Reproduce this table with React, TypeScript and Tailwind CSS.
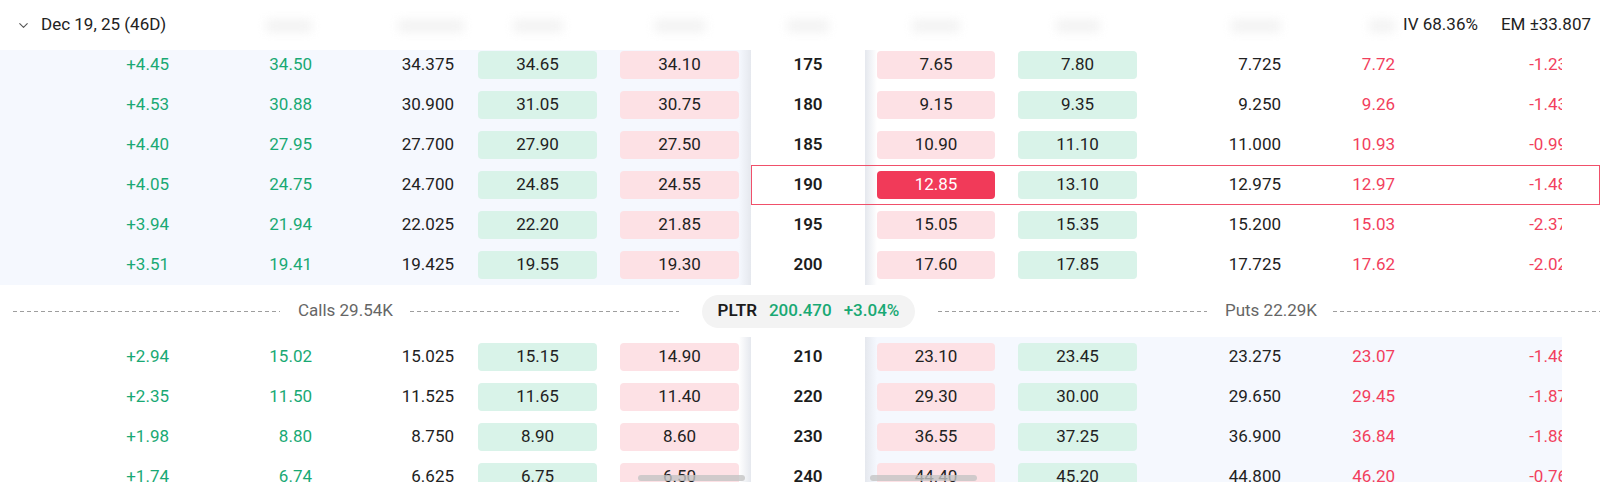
import React from "react";
import { ChevronDown } from "lucide-react";

interface Row {
  strike: number;
  chg: string;
  last: string;
  mid: string;
  bid: string;
  ask: string;
  pBid: string;
  pAsk: string;
  pMid: string;
  pLast: string;
  pChg: string;
  hl?: boolean;
}

const upper: Row[] = [
  { strike: 175, chg: "+4.45", last: "34.50", mid: "34.375", bid: "34.65", ask: "34.10", pBid: "7.65", pAsk: "7.80", pMid: "7.725", pLast: "7.72", pChg: "-1.23" },
  { strike: 180, chg: "+4.53", last: "30.88", mid: "30.900", bid: "31.05", ask: "30.75", pBid: "9.15", pAsk: "9.35", pMid: "9.250", pLast: "9.26", pChg: "-1.43" },
  { strike: 185, chg: "+4.40", last: "27.95", mid: "27.700", bid: "27.90", ask: "27.50", pBid: "10.90", pAsk: "11.10", pMid: "11.000", pLast: "10.93", pChg: "-0.99" },
  { strike: 190, chg: "+4.05", last: "24.75", mid: "24.700", bid: "24.85", ask: "24.55", pBid: "12.85", pAsk: "13.10", pMid: "12.975", pLast: "12.97", pChg: "-1.48", hl: true },
  { strike: 195, chg: "+3.94", last: "21.94", mid: "22.025", bid: "22.20", ask: "21.85", pBid: "15.05", pAsk: "15.35", pMid: "15.200", pLast: "15.03", pChg: "-2.37" },
  { strike: 200, chg: "+3.51", last: "19.41", mid: "19.425", bid: "19.55", ask: "19.30", pBid: "17.60", pAsk: "17.85", pMid: "17.725", pLast: "17.62", pChg: "-2.02" },
];

const lower: Row[] = [
  { strike: 210, chg: "+2.94", last: "15.02", mid: "15.025", bid: "15.15", ask: "14.90", pBid: "23.10", pAsk: "23.45", pMid: "23.275", pLast: "23.07", pChg: "-1.48" },
  { strike: 220, chg: "+2.35", last: "11.50", mid: "11.525", bid: "11.65", ask: "11.40", pBid: "29.30", pAsk: "30.00", pMid: "29.650", pLast: "29.45", pChg: "-1.87" },
  { strike: 230, chg: "+1.98", last: "8.80", mid: "8.750", bid: "8.90", ask: "8.60", pBid: "36.55", pAsk: "37.25", pMid: "36.900", pLast: "36.84", pChg: "-1.88" },
  { strike: 240, chg: "+1.74", last: "6.74", mid: "6.625", bid: "6.75", ask: "6.50", pBid: "44.40", pAsk: "45.20", pMid: "44.800", pLast: "46.20", pChg: "-0.76" },
];

// one strike row, calls on the left and puts on the right
const ChainRow = ({ row, callItm }: { row: Row; callItm: boolean }) => {
  return (
    <div className="relative flex h-[40px] items-center">
      <div className={`flex h-full w-[751px] items-center ${callItm ? "bg-[#f5f8fe]" : "bg-white"}`}>
        <div className="w-[177px] pr-[8px] text-right text-[#19a974]">{row.chg}</div>
        <div className="w-[147px] pr-[12px] text-right text-[#19a974]">{row.last}</div>
        <div className="w-[142px] pr-[12px] text-right text-[#222]">{row.mid}</div>
        <div className="w-[143px] pl-[12px]">
          <div className="flex h-[28px] w-[119px] items-center justify-center rounded-[4px] bg-[#d9f3e9] text-[#222]">{row.bid}</div>
        </div>
        <div className="flex h-full w-[142px] items-center pl-[11px]">
          <div className="flex h-[28px] w-[119px] items-center justify-center rounded-[4px] bg-[#fde1e5] text-[#222]">{row.ask}</div>
          <div className="ml-auto h-full w-[12px] bg-gradient-to-r from-transparent to-[#e5e8ee]" />
        </div>
      </div>
      <div className="flex h-full w-[114px] items-center justify-center bg-white font-semibold text-[#1c1c1c]">{row.strike}</div>
      <div className={`flex h-full flex-1 items-center ${callItm ? "bg-white" : "bg-[#f5f8fe]"}`}>
        <div className="flex h-full w-[142px] items-center">
          <div className="h-full w-[12px] bg-gradient-to-r from-[#e5e8ee] to-transparent" />
          <div
            className={`flex h-[28px] w-[118px] items-center justify-center rounded-[4px] ${
              row.hl ? "bg-[#f13a59] text-white" : "bg-[#fde1e5] text-[#222]"
            }`}
          >
            {row.pBid}
          </div>
        </div>
        <div className="w-[142px] pl-[11px]">
          <div className="flex h-[28px] w-[119px] items-center justify-center rounded-[4px] bg-[#d9f3e9] text-[#222]">{row.pAsk}</div>
        </div>
        <div className="w-[144px] pr-[12px] text-right text-[#222]">{row.pMid}</div>
        <div className="w-[114px] pr-[12px] text-right text-[#f23f5d]">{row.pLast}</div>
        <div className="w-[155px] overflow-hidden">
          <div className="w-[172px] pr-[12px] text-right text-[#f23f5d]">{row.pChg}</div>
        </div>
        <div className="h-full flex-1 bg-white" />
      </div>
      {row.hl && <div className="pointer-events-none absolute inset-y-0 left-[751px] right-0 border border-[#f0506a]" />}
    </div>
  );
};

const Blob = ({ w }: { w: number }) => (
  <div className="h-[14px] rounded-[3px] bg-[#efefef] blur-[5px]" style={{ width: w }} />
);

const Dashes = ({ className }: { className: string }) => (
  <div className={`h-px bg-[repeating-linear-gradient(to_right,#9e9e9e_0_4px,transparent_4px_7px)] ${className}`} />
);

export default function App() {
  return (
    <div className="relative h-[482px] w-[1600px] overflow-hidden bg-white font-['Roboto',sans-serif] text-[17px]">
      {/* header with blurred column titles behind */}
      <div className="relative z-10 grid h-[50px] bg-white">
        <div className="flex h-full items-center pt-[2px] opacity-70 [grid-area:1/1]">
          <div className="flex w-[177px] justify-end pr-[12px]" />
          <div className="flex w-[147px] justify-end pr-[12px]"><Blob w={46} /></div>
          <div className="flex w-[142px] justify-end pr-[2px]"><Blob w={66} /></div>
          <div className="flex w-[143px] justify-center"><Blob w={50} /></div>
          <div className="flex w-[142px] justify-center"><Blob w={52} /></div>
          <div className="flex w-[114px] justify-center"><Blob w={42} /></div>
          <div className="flex w-[142px] justify-center"><Blob w={48} /></div>
          <div className="flex w-[142px] justify-center"><Blob w={44} /></div>
          <div className="flex w-[144px] justify-end pr-[12px]"><Blob w={50} /></div>
          <div className="flex w-[114px] justify-end pr-[12px]"><Blob w={26} /></div>
        </div>
        <div className="flex h-full items-center justify-between pl-[16px] pr-[9px] [grid-area:1/1]">
          <div className="flex items-center gap-[10px] text-[#222]">
            <ChevronDown size={15} strokeWidth={1.75} className="text-[#555]" />
            <span>Dec 19, 25 (46D)</span>
          </div>
          <div className="flex items-center gap-[23px] text-[#222]">
            <span>IV 68.36%</span>
            <span>EM ±33.807</span>
          </div>
        </div>
      </div>

      <div className="-mt-[5px]">
        {upper.map((r) => (
          <ChainRow key={r.strike} row={r} callItm={true} />
        ))}

        <div className="flex h-[52px] items-center pl-[13px] text-[#666]">
          <Dashes className="w-[267px]" />
          <span className="ml-[18px] mr-[17px]">Calls 29.54K</span>
          <Dashes className="w-[269px]" />
          <div className="mx-[23px] flex h-[33px] w-[213px] items-center justify-center gap-[12px] rounded-full bg-[#f3f3f3]">
            <span className="font-semibold text-[#1c1c1c]">PLTR</span>
            <span className="font-medium text-[#19a974]">200.470</span>
            <span className="font-medium text-[#19a974]">+3.04%</span>
          </div>
          <Dashes className="w-[269px]" />
          <span className="ml-[18px] mr-[16px]">Puts 22.29K</span>
          <Dashes className="flex-1" />
        </div>

        {lower.map((r) => (
          <ChainRow key={r.strike} row={r} callItm={false} />
        ))}
      </div>

      {/* overlay scrollbar thumbs */}
      <div className="absolute bottom-[1px] left-[638px] h-[6px] w-[107px] rounded-full bg-[#c4c4c4]/80" />
      <div className="absolute bottom-[1px] left-[870px] h-[6px] w-[107px] rounded-full bg-[#c4c4c4]/80" />
    </div>
  );
}
